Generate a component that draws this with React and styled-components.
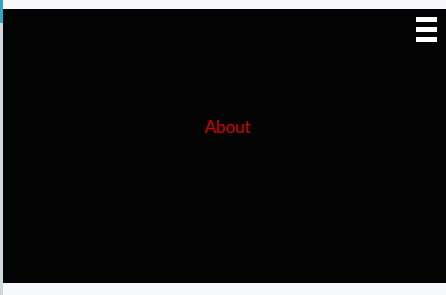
import React from "react";
import styled, { createGlobalStyle } from "styled-components";

const Global = createGlobalStyle`
  html, body { margin: 0; padding: 0; background: #f7f8fc; overflow: hidden; }
  #root { width: 446px; height: 295px; }
`;

const Page = styled.div`
  display: flex;
  width: 446px;
  height: 295px;
`;

const SideRail = styled.div`
  width: 3px;
  flex: none;
  display: flex;
  flex-direction: column;
  background: #cfd6dc;
`;

const RailAccent = styled.div`
  height: 23px;
  background: #2aa9c6;
`;

const Main = styled.div`
  flex: 1;
  padding-top: 9px;
`;

const Stage = styled.section`
  position: relative;
  height: 274px;
  background: #030303;
  display: flex;
  justify-content: center;
  padding-top: 108px;
  box-sizing: border-box;
`;

const Title = styled.h1`
  margin: 0;
  font-family: "Lato", "DejaVu Sans", sans-serif;
  font-weight: 400;
  font-size: 17px;
  line-height: 20px;
  color: #d10000;
  margin-left: 6px;
`;

const Burger = styled.button`
  position: absolute;
  top: 8px;
  right: 9px;
  width: 21px;
  padding: 0;
  border: 0;
  background: none;
  display: flex;
  flex-direction: column;
  gap: 5px;
`;

const Bar = styled.span`
  display: block;
  height: 5px;
  background: #ffffff;
`;

export default function App() {
  return (
    <>
      <Global />
      <Page>
        <SideRail>
          <RailAccent />
        </SideRail>
        <Main>
          <Stage>
            <Burger aria-label="menu">
              <Bar />
              <Bar />
              <Bar />
            </Burger>
            <Title>About</Title>
          </Stage>
        </Main>
      </Page>
    </>
  );
}
